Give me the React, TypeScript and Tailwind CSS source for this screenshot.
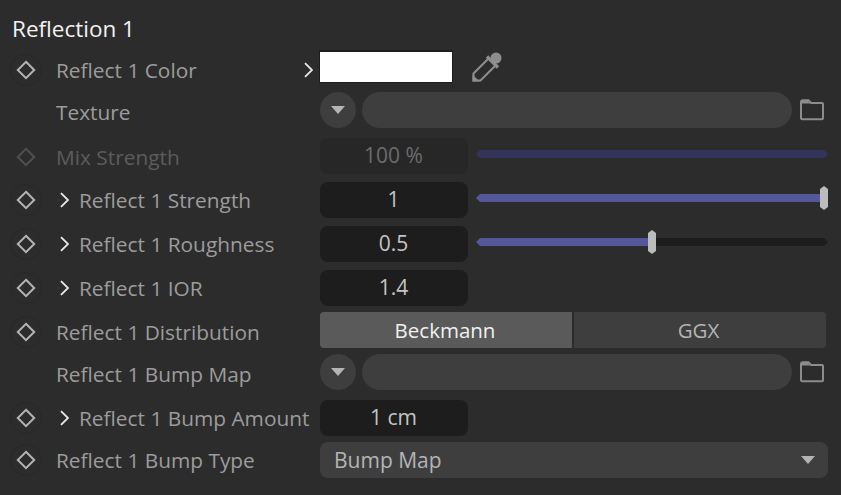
import type { ReactNode } from "react";

type Key = "on" | "dim" | "none";

function Diamond({ kind }: { kind: Key }) {
  if (kind === "none") return <div className="h-8 w-8 shrink-0" />;
  return (
    <div
      className={`flex h-8 w-8 shrink-0 items-center justify-center rounded-full border ${
        kind === "on" ? "border-[#282828]" : "border-transparent"
      }`}
    >
      <svg width="20" height="20" viewBox="0 0 20 20" fill="none">
        <path
          d="M10 1.8 18.2 10 10 18.2 1.8 10Z"
          stroke={kind === "on" ? "#b4b4b4" : "#505050"}
          strokeWidth="2"
        />
      </svg>
    </div>
  );
}

function Chevron({ color = "#e8e8e8" }: { color?: string }) {
  return (
    <svg width="9" height="16" viewBox="0 0 9 16" fill="none" className="shrink-0">
      <path d="M1 1.2 8 8 1 14.8" stroke={color} strokeWidth="1.8" />
    </svg>
  );
}

function Row({
  label,
  kind = "on",
  expand,
  shift = "",
  dim,
  extra,
  className = "",
  children,
}: {
  label: string;
  kind?: Key;
  expand?: boolean;
  shift?: string;
  dim?: boolean;
  extra?: ReactNode;
  className?: string;
  children: ReactNode;
}) {
  return (
    <div className={`flex items-start ${className}`}>
      <div className={`flex h-9 w-[320px] shrink-0 items-center pl-[10px] ${shift}`}>
        <Diamond kind={kind} />
        {expand ? (
          <div className="ml-[18px] mr-[10px]">
            <Chevron />
          </div>
        ) : (
          <div className="w-[14px]" />
        )}
        <span className={`whitespace-nowrap text-[20.85px] leading-none ${dim ? "text-[#5c5c5c]" : "text-[#9c9c9c]"}`}>
          {label}
        </span>
        {extra}
      </div>
      {children}
    </div>
  );
}

function Num({ value, dim }: { value: string; dim?: boolean }) {
  return (
    <div
      className={`flex h-9 w-[148px] shrink-0 items-center justify-center rounded-lg pr-[1px] text-[21px] ${
        dim ? "bg-[#272727] text-[#6c6c6c]" : "bg-[#1d1d1d] text-[#c4c4c4]"
      }`}
    >
      {value}
    </div>
  );
}

function Slider({ pct, dim }: { pct: number; dim?: boolean }) {
  return (
    <div className="relative ml-2 mt-3 h-2 w-[352px]">
      <div className="h-2 w-full overflow-hidden bg-[#1d1d1d] [clip-path:polygon(4px_0,calc(100%-4px)_0,100%_50%,calc(100%-4px)_100%,4px_100%,0_50%)]">
        <div
          className={`h-full ${dim ? "bg-[#33345a]" : "bg-[#54589a]"}`}
          style={{ width: `${pct}%` }}
        />
      </div>
      {!dim && (
        <div
          className="absolute -top-2 h-6 w-2 -translate-x-full bg-[#bcbcbc] [clip-path:polygon(50%_0,100%_3px,100%_calc(100%-3px),50%_100%,0_calc(100%-3px),0_3px)]"
          style={{ left: `calc(${pct}% + ${pct === 100 ? 0 : 4}px)` }}
        />
      )}
    </div>
  );
}

function Triangle({ className = "" }: { className?: string }) {
  return (
    <svg width="14" height="8" viewBox="0 0 14 8" className={className}>
      <path d="M0 0H14L7 8Z" fill="#b4b4b4" />
    </svg>
  );
}

function LinkField() {
  return (
    <div className="flex items-center">
      <div className="flex h-9 w-9 shrink-0 items-center justify-center rounded-full bg-[#3e3e3e]">
        <Triangle />
      </div>
      <div className="ml-[6px] h-9 w-[430px] rounded-full bg-[#3e3e3e]" />
      <svg width="24" height="22" viewBox="0 0 24 22" fill="none" className="ml-2">
        <path
          d="M1 18.5V3.2C1 2 1.8 1.2 3 1.2h5.5L11 4h11c.6 0 1 .4 1 1v14.2c0 .6-.4 1-1 1H2.2C1.5 20.2 1 19.5 1 18.5Z"
          stroke="#8c8c8c"
          strokeWidth="2"
        />
        <path d="M2 2h6.2l2.4 2.6H2Z" fill="#8c8c8c" />
      </svg>
    </div>
  );
}

function Eyedropper() {
  return (
    <svg width="32" height="32" viewBox="0 0 32 32" fill="none" className="ml-[18px] mt-[1px]">
      <circle cx="25" cy="7" r="5.5" fill="#8e8e8e" />
      <path d="M16 5.5 27 16.5" stroke="#8e8e8e" strokeWidth="3.4" />
      <path d="M17 8 2.5 22.5v7H9.5L24 15" stroke="#8e8e8e" strokeWidth="2" />
      <path d="M1.5 23.5 8.5 30.5H1.5Z" fill="#8e8e8e" />
    </svg>
  );
}

export default function App() {
  return (
    <div
      className="h-[495px] w-[841px] overflow-hidden bg-[#2c2c2c] pt-[14px]"
      style={{ fontFamily: '"Open Sans", "Noto Sans", sans-serif' }}
    >
      <h2 className="mb-px h-[35px] pl-[12px] text-[22.5px] font-normal leading-[30px] text-[#f2f2f2]">Reflection 1</h2>

      <Row
        label="Reflect 1 Color"
        shift="pt-1"
        extra={
          <div className="ml-auto mr-[7px]">
            <Chevron />
          </div>
        }
      >
        <div className="-ml-px flex items-start">
          <div className="h-[33px] w-[134px] border-x border-b border-t-2 border-[#1d1d1d] bg-white" />
          <Eyedropper />
        </div>
      </Row>

      <Row label="Texture" kind="none" shift="pt-1" className="mt-[6px]">
        <LinkField />
      </Row>

      <Row label="Mix Strength" kind="dim" dim shift="pt-0.5" className="mt-[10px]">
        <Num value="100 %" dim />
        <Slider pct={100} dim />
      </Row>

      <Row label="Reflect 1 Strength" expand className="mt-2">
        <Num value="1" />
        <Slider pct={100} />
      </Row>

      <Row label="Reflect 1 Roughness" expand className="mt-2">
        <Num value="0.5" />
        <Slider pct={50} />
      </Row>

      <Row label="Reflect 1 IOR" expand className="mt-2">
        <Num value="1.4" />
      </Row>

      <Row label="Reflect 1 Distribution" shift="pt-1" className="mt-[6px]">
        <div className="flex h-9 w-[506px] gap-[2px] text-[20.5px]">
          <div className="flex w-[252px] items-center justify-center rounded-l-sm bg-[#5a5a5a] pr-[2px] pt-px text-[#f0f0f0]">Beckmann</div>
          <div className="flex w-[252px] items-center justify-center rounded-r-sm bg-[#3e3e3e] pr-[3px] pt-px text-[#b4b4b4]">GGX</div>
        </div>
      </Row>

      <Row label="Reflect 1 Bump Map" kind="none" shift="pt-1" className="mt-[6px]">
        <LinkField />
      </Row>

      <Row label="Reflect 1 Bump Amount" expand className="mt-[10px]">
        <Num value="1 cm" />
      </Row>

      <Row label="Reflect 1 Bump Type" className="mt-[6px]">
        <div className="flex h-9 w-[508px] items-center justify-between rounded-lg bg-[#3e3e3e] pl-[14px] pr-[13px] text-[21px] text-[#b4b4b4]">
          <span className="translate-y-px">Bump Map</span>
          <Triangle />
        </div>
      </Row>
    </div>
  );
}
